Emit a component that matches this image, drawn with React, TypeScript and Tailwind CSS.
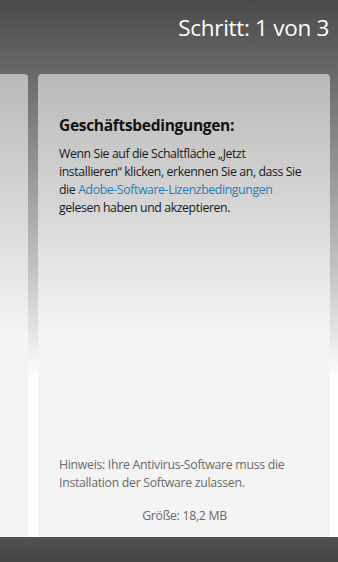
export default function App() {
  return (
    <div
      className="relative w-[338px] h-[562px] overflow-hidden flex flex-col bg-[linear-gradient(to_bottom,#4a4a4a_0px,#6c6c6c_80px,#c8c8c8_280px,#ffffff_380px,#ffffff_100%)]"
      style={{ fontFamily: '"Open Sans", "Liberation Sans", sans-serif' }}
    >
      <div className="h-[74px] flex items-start justify-end pr-[9px] pt-[12px]">
        <span className="text-white text-[22.5px] leading-[31px] tracking-[-0.3px]">Schritt: 1 von 3</span>
      </div>
      <div className="flex-1 flex gap-[10px] ml-[-20px] pr-[8px]">
        <div className="w-[48px] rounded-t-[4px] bg-[linear-gradient(to_bottom,#b9b9b9_0px,#d6d6d6_130px,#f4f4f4_260px,#f4f4f4_100%)]" />
        <div className="flex-1 flex flex-col rounded-t-[4px] bg-[linear-gradient(to_bottom,#b9b9b9_0px,#d6d6d6_130px,#f4f4f4_260px,#f4f4f4_100%)] pl-[21px] pr-[20px]">
          <h2 className="mt-[40px] text-[15.5px] leading-[22px] font-bold text-[#111] tracking-[-0.3px]">Geschäftsbedingungen:</h2>
          <p className="mt-[9px] text-[12.3px] leading-[18px] text-[#1a1a1a] tracking-[-0.4px] whitespace-nowrap">
            Wenn Sie auf die Schaltfläche „Jetzt
            <br />
            installieren“ klicken, erkennen Sie an, dass Sie
            <br />
            die <a href="#" className="text-[#2a7bb5]">Adobe-Software-Lizenzbedingungen</a>
            <br />
            gelesen haben und akzeptieren.
          </p>
          <div className="flex-1" />
          <p className="pr-[18px] text-[12.3px] leading-[18px] text-[#6a6a6a] tracking-[-0.3px]">
            Hinweis: Ihre Antivirus-Software muss die Installation der Software zulassen.
          </p>
          <p className="mt-[15px] mb-[12px] text-center text-[12.3px] leading-[18px] text-[#6a6a6a] tracking-[-0.3px]">Größe: 18,2 MB</p>
        </div>
      </div>
      <div className="h-[25px] bg-[linear-gradient(to_bottom,#525252,#444444)]" />
    </div>
  );
}
